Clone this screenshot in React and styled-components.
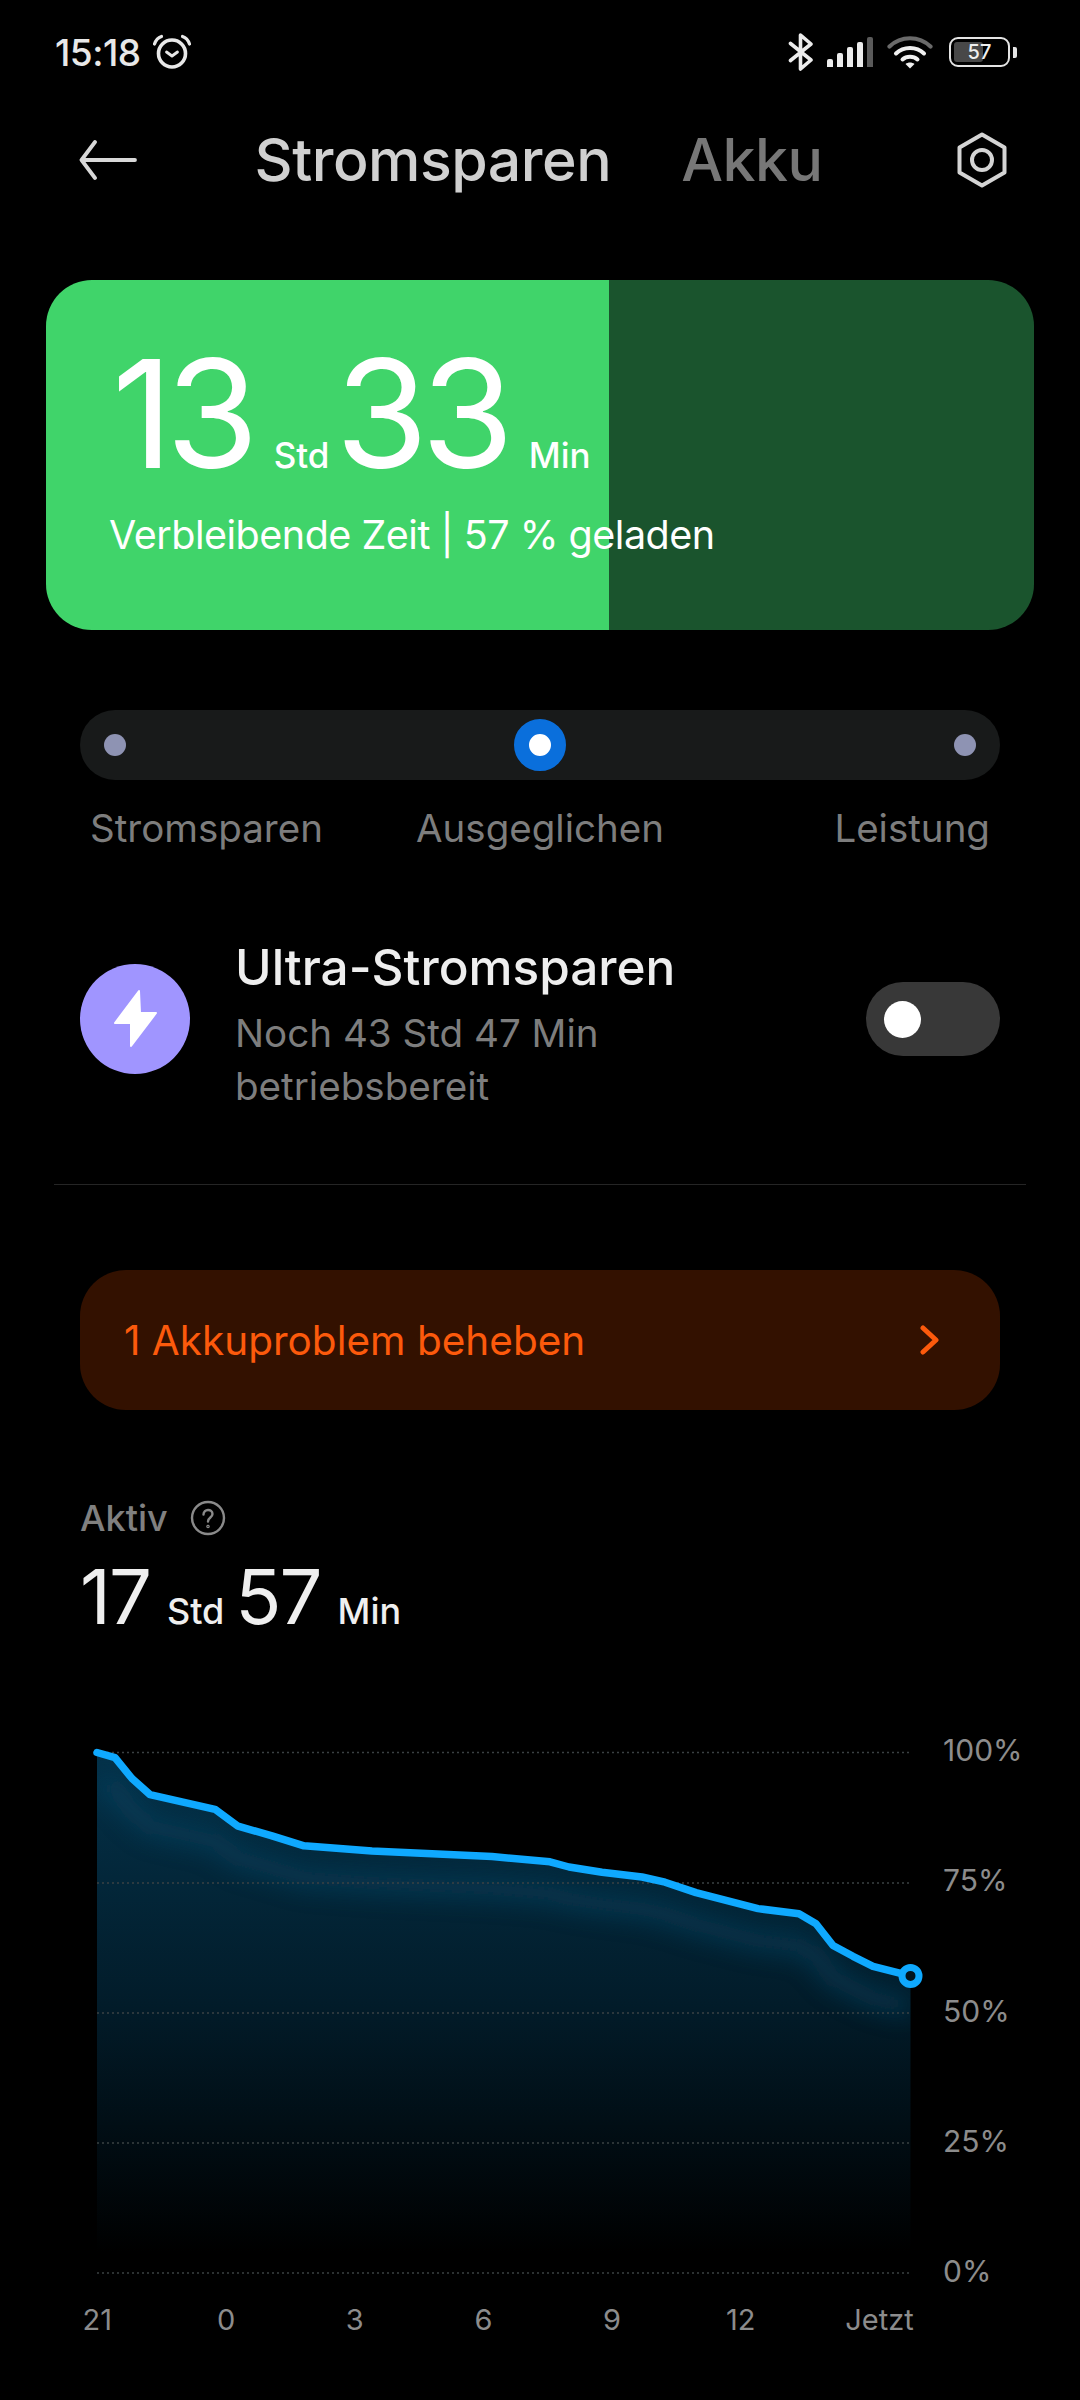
import React from "react";
import styled, { createGlobalStyle } from "styled-components";

const GlobalStyle = createGlobalStyle`
  html, body {
    margin: 0;
    padding: 0;
    background: #000;
  }
  body {
    font-family: "Inter", "Noto Sans", sans-serif;
    color: #fff;
  }
`;

const linePoints = [
  [17, 20.5], [35, 25.7], [52, 46.5], [70, 62.6], [135, 77.3], [158, 94.2],
  [192, 103.8], [224, 113.8], [292, 119], [412, 124.6], [470, 129.8],
  [489, 135], [522, 140.2], [562, 145], [585, 150.2], [616, 160.6],
  [678, 176.6], [719, 181.8], [736, 191.8], [753, 213.5], [773, 224.3],
  [793, 234.3], [830.5, 243.9],
];

const linePath = linePoints.map(([x, y], i) => `${i ? "L" : "M"}${x} ${y}`).join(" ");
const areaPath = `${linePath} L830.5 541 L17 541 Z`;
const gridLines = [20.5, 151, 281, 411, 541];
const yLabels = ["100%", "75%", "50%", "25%", "0%"];
const xLabels = ["21", "0", "3", "6", "9", "12"];

export default function App() {
  return (
    <Page>
      <GlobalStyle />

      <StatusBar>
        <StatusLeft>
          <Clock>15:18</Clock>
          <svg width="40" height="40" viewBox="0 0 40 40" fill="none" stroke="#e8e8e8" strokeLinecap="round" strokeLinejoin="round">
            <circle cx="20" cy="21.5" r="13.5" strokeWidth="3.6" />
            <path d="M14.5 20l5.5 4 5.5-4" strokeWidth="2.8" />
            <path d="M2.5 12C4 7.5 6.5 5.5 9.5 4.5M37.5 12C36 7.5 33.5 5.5 30.5 4.5" strokeWidth="3.2" />
          </svg>
        </StatusLeft>
        <StatusRight>
          <svg width="26" height="38" viewBox="0 0 26 38" fill="none" stroke="#ececec" strokeWidth="3.6" strokeLinejoin="round" strokeLinecap="round">
            <path d="M2.5 10.5L23 27 12.5 36V2L23 11 2.5 27.500" />
          </svg>
          <SignalBars>
            <Bar $h={8} />
            <Bar $h={14} />
            <Bar $h={20} />
            <Bar $h={25} />
            <Bar $h={30} $dim />
          </SignalBars>
          <svg width="46" height="34" viewBox="0 0 46 34" fill="none" strokeLinecap="round">
            <path d="M2.500 11.500C14 0.500 32 0.500 43.500 11.500" stroke="#6a6a6a" strokeWidth="4.200" />
            <path d="M9 18.500C16.500 11 29.500 11 37 18.500" stroke="#f0f0f0" strokeWidth="4" />
            <path d="M15.500 24.500C19.500 20.800 26.500 20.800 30.500 24.500" stroke="#f0f0f0" strokeWidth="4" />
            <path d="M23 33.500L18.500 29C21 27 25 27 27.500 29Z" fill="#f0f0f0" />
          </svg>
          <Battery>
            <BatteryShell>
              <BatteryFill $level={57} />
              <BatteryText>57</BatteryText>
            </BatteryShell>
            <BatteryNub />
          </Battery>
        </StatusRight>
      </StatusBar>

      <Header>
        <svg width="58" height="40" viewBox="0 0 58 40" fill="none" stroke="#d8d8d8" strokeWidth="3.8" strokeLinecap="round" strokeLinejoin="round">
          <path d="M56 20H3M16 2L2.500 20 16 38" />
        </svg>
        <Tabs>
          <Tab $active>Stromsparen</Tab>
          <Tab>Akku</Tab>
        </Tabs>
        <svg width="52" height="56" viewBox="0 0 52 56" fill="none" stroke="#d4d4d4" strokeWidth="4" strokeLinejoin="round">
          <path d="M26 2.500L48.500 15.500V40.500L26 53.500 3.500 40.500V15.500Z" />
          <circle cx="26" cy="28" r="10" />
        </svg>
      </Header>

      <BatteryCard $level={57}>
        <TimeRow>
          <BigNumber>13</BigNumber>
          <BigUnit>Std</BigUnit>
          <BigNumber>33</BigNumber>
          <BigUnit>Min</BigUnit>
        </TimeRow>
        <CardCaption>Verbleibende Zeit | 57 % geladen</CardCaption>
      </BatteryCard>

      <ModeTrack>
        <ModeDot />
        <ModeKnob />
        <ModeDot />
      </ModeTrack>
      <ModeLabels>
        <ModeLabel $align="start">Stromsparen</ModeLabel>
        <ModeLabel $align="center">Ausgeglichen</ModeLabel>
        <ModeLabel $align="end">Leistung</ModeLabel>
      </ModeLabels>

      <UltraRow>
        <UltraIcon>
          <svg width="110" height="110" viewBox="0 0 110 110">
            <path d="M59 27L35 59H51V82L76 49H60Z" fill="#fff" stroke="#fff" strokeWidth="2" strokeLinejoin="round" />
          </svg>
        </UltraIcon>
        <UltraText>
          <UltraTitle>Ultra-Stromsparen</UltraTitle>
          <UltraSub>Noch 43 Std 47 Min</UltraSub>
          <UltraSub>betriebsbereit</UltraSub>
        </UltraText>
        <Toggle>
          <ToggleKnob />
        </Toggle>
      </UltraRow>

      <Divider />

      <IssueButton>
        <IssueText>1 Akkuproblem beheben</IssueText>
        <svg width="22" height="30" viewBox="0 0 22 30" fill="none" stroke="#fc5a0c" strokeWidth="5" strokeLinecap="round" strokeLinejoin="round">
          <path d="M4 3L17 15 4 27" />
        </svg>
      </IssueButton>

      <ActiveHead>
        <ActiveLabel>Aktiv</ActiveLabel>
        <svg width="36" height="36" viewBox="0 0 36 36" fill="none" stroke="#8a8a8a" strokeWidth="2.400" strokeLinecap="round">
          <circle cx="18" cy="18" r="16" />
          <path d="M13.500 14.500C13.500 8.500 22.500 8.500 22.500 14C22.500 17.500 18 17.500 18 21.500" />
          <circle cx="18" cy="26.500" r="0.600" />
        </svg>
      </ActiveHead>
      <ActiveTime>
        <ActiveNumber>17</ActiveNumber>
        <ActiveUnit>Std</ActiveUnit>
        <ActiveNumber>57</ActiveNumber>
        <ActiveUnit>Min</ActiveUnit>
      </ActiveTime>

      <ChartRow>
        <svg width="860" height="561" viewBox="0 0 860 561" fill="none">
          <defs>
            <linearGradient id="areaFill" x1="0" y1="20" x2="0" y2="520" gradientUnits="userSpaceOnUse">
              <stop offset="0" stopColor="#04324a" />
              <stop offset="0.5" stopColor="#021c2a" />
              <stop offset="1" stopColor="#000" />
            </linearGradient>
            <clipPath id="areaClip">
              <path d={areaPath} />
            </clipPath>
            <filter id="glow" x="-10%" y="-30%" width="120%" height="160%">
              <feGaussianBlur stdDeviation="12" />
            </filter>
          </defs>
          <path d={areaPath} fill="url(#areaFill)" />
          <g clipPath="url(#areaClip)">
            <path d={linePath} transform="translate(0 32)" stroke="#0a4766" strokeWidth="18" filter="url(#glow)" opacity="0.6" />
          </g>
          {gridLines.map((y) => (
            <line key={y} x1="17" x2="832" y1={y} y2={y} stroke="#3b4143" strokeWidth="1.500" strokeDasharray="2 3" />
          ))}
          <path d={linePath} stroke="#0fa9ff" strokeWidth="7.500" strokeLinejoin="round" strokeLinecap="round" />
          <circle cx="830.500" cy="243.900" r="8.500" fill="#02141e" stroke="#0fa9ff" strokeWidth="7" />
        </svg>
        <YAxis>
          {yLabels.map((label) => (
            <AxisLabel key={label}>{label}</AxisLabel>
          ))}
        </YAxis>
      </ChartRow>

      <XAxis>
        {xLabels.map((label) => (
          <AxisTick key={label}>{label}</AxisTick>
        ))}
        <AxisTick $last>Jetzt</AxisTick>
      </XAxis>
    </Page>
  );
}

// Styling

const Page = styled.div`
  width: 1080px;
  height: 2400px;
  background: #000;
  overflow: hidden;
  display: flex;
  flex-direction: column;
`;

const StatusBar = styled.div`
  height: 104px;
  padding: 0 63px 0 55px;
  display: flex;
  align-items: center;
  justify-content: space-between;
`;

const StatusLeft = styled.div`
  display: flex;
  align-items: center;
  gap: 11px;
`;

const Clock = styled.span`
  font-size: 37px;
  font-weight: 500;
  letter-spacing: -0.5px;
  color: #e8e8e8;
`;

const StatusRight = styled.div`
  display: flex;
  align-items: center;
  gap: 13px;
`;

const SignalBars = styled.div`
  display: flex;
  align-items: flex-end;
  gap: 3.5px;
  height: 30px;
  margin-right: 1px;
`;

const Bar = styled.span`
  width: 6.500px;
  height: ${(p) => p.$h}px;
  border-radius: 2px 2px 0 0;
  background: ${(p) => (p.$dim ? "#5a5a5a" : "#ececec")};
`;

const Battery = styled.div`
  display: flex;
  align-items: center;
  gap: 3px;
  margin-left: 3px;
`;

const BatteryShell = styled.div`
  width: 61px;
  height: 30px;
  box-sizing: border-box;
  border: 2.500px solid #e4e4e4;
  border-radius: 9px;
  padding: 3px;
  display: flex;
  align-items: stretch;
  position: relative;
`;

const BatteryFill = styled.div`
  width: ${(p) => p.$level}%;
  background: #484848;
  border-radius: 3px;
`;

const BatteryText = styled.span`
  position: absolute;
  left: 0;
  right: 0;
  top: 0;
  bottom: 0;
  display: flex;
  align-items: center;
  justify-content: center;
  font-size: 20px;
  font-weight: 500;
  color: #efefef;
`;

const BatteryNub = styled.div`
  width: 4px;
  height: 11px;
  border-radius: 0 2px 2px 0;
  background: #e4e4e4;
`;

const Header = styled.div`
  height: 112px;
  padding: 0 72px 0 79px;
  display: flex;
  align-items: center;
  justify-content: space-between;
`;

const Tabs = styled.div`
  display: flex;
  align-items: center;
  gap: 70px;
  margin: 0 25px 2px 9px;
`;

const Tab = styled.span`
  font-size: 59px;
  font-weight: 500;
  letter-spacing: -0.5px;
  color: ${(p) => (p.$active ? "#d0d0d0" : "#777")};
`;

const BatteryCard = styled.div`
  margin: 64px 46px 0;
  height: 350px;
  box-sizing: border-box;
  padding: 64px 0 0 60px;
  border-radius: 46px;
  background: linear-gradient(90deg, #40d46a ${(p) => p.$level}%, #1a542d ${(p) => p.$level}%);
`;

const TimeRow = styled.div`
  display: flex;
  align-items: baseline;
  height: 140px;
`;

const BigNumber = styled.span`
  font-size: 150px;
  line-height: 140px;
  font-weight: 400;
  letter-spacing: -7px;
  margin-left: 6px;
  color: #fff;
`;

const BigUnit = styled.span`
  font-size: 35px;
  font-weight: 500;
  margin: 0 0 0 22px;
  color: #fff;
`;

const CardCaption = styled.div`
  margin-top: 26px;
  margin-left: 3px;
  font-size: 39.500px;
  line-height: 50px;
  letter-spacing: -0.5px;
  color: #fff;
`;

const ModeTrack = styled.div`
  margin: 80px 80px 0;
  height: 70px;
  box-sizing: border-box;
  padding: 0 24px;
  border-radius: 35px;
  background: #181a1a;
  display: flex;
  align-items: center;
  justify-content: space-between;
`;

const ModeDot = styled.span`
  width: 22px;
  height: 22px;
  border-radius: 50%;
  background: #8e93b3;
`;

const ModeKnob = styled.span`
  width: 52px;
  height: 52px;
  box-sizing: border-box;
  border: 15px solid #0a6fdc;
  border-radius: 50%;
  background: #fff;
`;

const ModeLabels = styled.div`
  margin: 24px 80px 0;
  padding: 0 10px;
  display: grid;
  grid-template-columns: 1fr auto 1fr;
`;

const ModeLabel = styled.span`
  justify-self: ${(p) => p.$align};
  font-size: 38.500px;
  line-height: 48px;
  color: #7d7d7d;
`;

const UltraRow = styled.div`
  margin: 87px 80px 0;
  display: flex;
  align-items: flex-start;
`;

const UltraIcon = styled.div`
  width: 110px;
  height: 110px;
  margin-top: 25px;
  border-radius: 50%;
  background: #a095ff;
`;

const UltraText = styled.div`
  flex: 1;
  margin-left: 45px;
`;

const UltraTitle = styled.div`
  font-size: 49.500px;
  line-height: 56px;
  font-weight: 500;
  color: #eeeeee;
  margin-bottom: 12px;
`;

const UltraSub = styled.div`
  font-size: 38.600px;
  line-height: 53px;
  color: #7d7d7d;
`;

const Toggle = styled.div`
  width: 134px;
  height: 74px;
  margin-top: 43px;
  box-sizing: border-box;
  padding-left: 18px;
  border-radius: 37px;
  background: #383838;
  display: flex;
  align-items: center;
`;

const ToggleKnob = styled.span`
  width: 37px;
  height: 37px;
  border-radius: 50%;
  background: #fff;
`;

const Divider = styled.div`
  margin: 71px 54px 0;
  height: 1px;
  background: #252525;
`;

const IssueButton = styled.div`
  margin: 85px 80px 0;
  height: 140px;
  box-sizing: border-box;
  padding: 0 59px 0 44px;
  border-radius: 46px;
  background: #331100;
  display: flex;
  align-items: center;
  justify-content: space-between;
`;

const IssueText = styled.span`
  font-size: 40.500px;
  color: #fc5a0c;
`;

const ActiveHead = styled.div`
  margin: 86px 80px 0;
  height: 44px;
  display: flex;
  align-items: center;
  gap: 22px;
`;

const ActiveLabel = styled.span`
  font-size: 36px;
  line-height: 44px;
  font-weight: 500;
  color: #808080;
`;

const ActiveTime = styled.div`
  margin: 11px 80px 0;
  height: 90px;
  display: flex;
  align-items: baseline;
`;

const ActiveNumber = styled.span`
  font-size: 76px;
  line-height: 90px;
  font-weight: 400;
  letter-spacing: -2px;
  color: #efefef;
`;

const ActiveUnit = styled.span`
  font-size: 36px;
  font-weight: 500;
  margin: 0 11px 0 17px;
  color: #efefef;
`;

const ChartRow = styled.div`
  margin: 91px 0 0 80px;
  display: flex;
  align-items: stretch;
`;

const YAxis = styled.div`
  margin: -2px 0 2px 3px;
  display: flex;
  flex-direction: column;
  justify-content: space-between;
`;

const AxisLabel = styled.span`
  font-size: 30px;
  line-height: 40px;
  color: #8c8c8c;
`;

const XAxis = styled.div`
  margin: 7px 0 0 33px;
  display: grid;
  grid-template-columns: repeat(7, 128.700px);
`;

const AxisTick = styled.span`
  font-size: 29px;
  line-height: 40px;
  text-align: center;
  color: #8c8c8c;
  padding-left: ${(p) => (p.$last ? "20px" : "0")};
`;
